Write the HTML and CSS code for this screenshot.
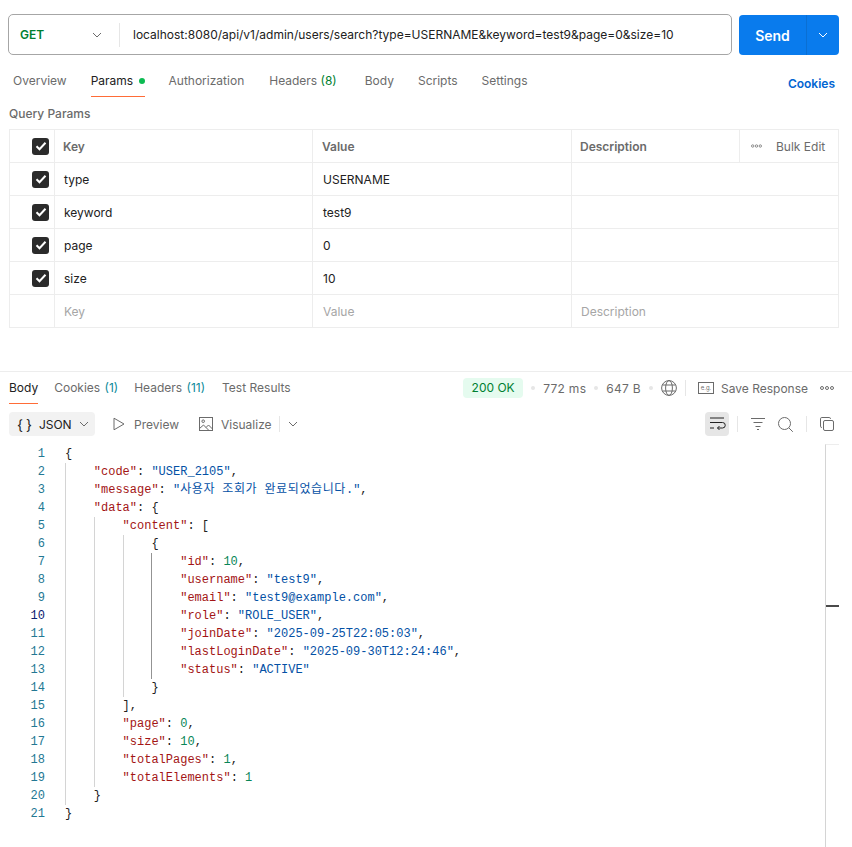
FILE: index.html
```html
<!DOCTYPE html>
<html lang="en">
<head>
    <meta charset="UTF-8">
    <meta name="viewport" content="width=device-width, initial-scale=1.0">
    <title>Request</title>
    <link rel="stylesheet" href="styles.css">
</head>
<body>

<div class="url-row">
    <div class="url-box">
        <div class="method">
            <span>GET</span>
            <svg class="chev" viewBox="0 0 10 6"><path d="M1 1l4 4 4-4"/></svg>
        </div>
        <div class="url">localhost:8080/api/v1/admin/users/search?type=USERNAME&amp;keyword=test9&amp;page=0&amp;size=10</div>
    </div>
    <div class="send">
        <div class="send-label">Send</div>
        <div class="send-more"><svg class="chev" viewBox="0 0 10 6"><path d="M1 1l4 4 4-4"/></svg></div>
    </div>
</div>

<div class="req-tabs">
    <div class="tab">Overview</div>
    <div class="tab active">Params <i class="dot"></i></div>
    <div class="tab tab-auth">Authorization</div>
    <div class="tab tab-wide">Headers <span class="count-green">(8)</span></div>
    <div class="tab">Body</div>
    <div class="tab">Scripts</div>
    <div class="tab">Settings</div>
    <div class="cookies">Cookies</div>
</div>

<div class="section-title">Query Params</div>

<div class="params">
    <div class="row head">
        <div class="cell check"><span class="box"><svg viewBox="0 0 12 10"><path d="M1.500 5.200l3 3L10.500 1.800"/></svg></span></div>
        <div class="cell key">Key</div>
        <div class="cell val">Value</div>
        <div class="cell desc">Description</div>
        <div class="cell bulk">
            <svg class="icon dots-small" viewBox="0 0 11 4"><circle cx="1.700" cy="2" r="1.200"/><circle cx="5.500" cy="2" r="1.200"/><circle cx="9.300" cy="2" r="1.200"/></svg>
            <span>Bulk Edit</span>
        </div>
    </div>
    <div class="row">
        <div class="cell check"><span class="box"><svg viewBox="0 0 12 10"><path d="M1.500 5.200l3 3L10.500 1.800"/></svg></span></div>
        <div class="cell key">type</div>
        <div class="cell val">USERNAME</div>
        <div class="cell desc"></div>
    </div>
    <div class="row">
        <div class="cell check"><span class="box"><svg viewBox="0 0 12 10"><path d="M1.500 5.200l3 3L10.500 1.800"/></svg></span></div>
        <div class="cell key">keyword</div>
        <div class="cell val">test9</div>
        <div class="cell desc"></div>
    </div>
    <div class="row">
        <div class="cell check"><span class="box"><svg viewBox="0 0 12 10"><path d="M1.500 5.200l3 3L10.500 1.800"/></svg></span></div>
        <div class="cell key">page</div>
        <div class="cell val">0</div>
        <div class="cell desc"></div>
    </div>
    <div class="row">
        <div class="cell check"><span class="box"><svg viewBox="0 0 12 10"><path d="M1.500 5.200l3 3L10.500 1.800"/></svg></span></div>
        <div class="cell key">size</div>
        <div class="cell val">10</div>
        <div class="cell desc"></div>
    </div>
    <div class="row empty">
        <div class="cell check"></div>
        <div class="cell key">Key</div>
        <div class="cell val">Value</div>
        <div class="cell desc">Description</div>
    </div>
</div>

<div class="response">
    <div class="res-head">
        <div class="tab active">Body</div>
        <div class="tab">Cookies <span class="count-teal">(1)</span></div>
        <div class="tab tab-res-headers">Headers <span class="count-teal">(11)</span></div>
        <div class="tab">Test Results</div>
        <div class="res-meta">
            <span class="status">200 OK</span>
            <i class="sep-dot"></i>
            <span class="stat">772 ms</span>
            <i class="sep-dot"></i>
            <span class="stat">647 B</span>
            <i class="sep-dot"></i>
            <svg class="icon globe" viewBox="0 0 16 16"><circle cx="8" cy="8" r="7.400"/><ellipse cx="8" cy="8" rx="3.400" ry="7.400"/><path d="M1.400 5h13.200M1.400 11h13.200"/></svg>
            <i class="vline"></i>
            <svg class="icon eg" viewBox="0 0 16 12"><rect x=".5" y=".5" width="15" height="11"/><text x="8" y="8" text-anchor="middle">e.g.</text></svg>
            <span>Save Response</span>
            <svg class="icon dots-big" viewBox="0 0 14 4"><circle cx="2" cy="2" r="1.500"/><circle cx="7" cy="2" r="1.500"/><circle cx="12" cy="2" r="1.500"/></svg>
        </div>
    </div>

    <div class="format-row">
        <div class="format-pill">
            <span class="braces">{ }</span>
            <span>JSON</span>
            <svg class="chev" viewBox="0 0 10 6"><path d="M1 1l4 4 4-4"/></svg>
        </div>
        <div class="format-opt preview">
            <svg class="icon" viewBox="0 0 12 14"><path d="M1 1.200v11.600L11 7z"/></svg>
            <span>Preview</span>
        </div>
        <div class="format-opt visualize">
            <svg class="icon" viewBox="0 0 14 14"><rect x=".5" y=".5" width="13" height="13"/><circle cx="4.200" cy="4.200" r="1.300"/><path d="M.5 11.500l4-3.500 5.500 5.500M7 10.500l2.500-2.500 4 4"/></svg>
            <span>Visualize</span>
        </div>
        <i class="vline"></i>
        <svg class="chev gray" viewBox="0 0 10 6"><path d="M1 1l4 4 4-4"/></svg>

        <div class="format-tools">
            <div class="wrap-btn">
                <svg class="icon" viewBox="0 0 16 14"><path d="M1 1h14M1 11h4M1 5.500h12.500a2.750 2.750 0 0 1 0 5.500H8.500M10.500 9l-2 2 2 2"/></svg>
            </div>
            <i class="vline"></i>
            <svg class="icon filter" viewBox="0 0 14 12"><path d="M0 .5h14M2.500 4.500h9M4.500 8.500h5M6 11.500h2"/></svg>
            <svg class="icon search" viewBox="0 0 15 15"><circle cx="6.500" cy="6.500" r="6"/><path d="M10.800 10.800l4 4"/></svg>
            <i class="vline"></i>
            <svg class="icon copy" viewBox="0 0 14 14"><rect x="3.500" y="3.500" width="10" height="10" rx="1.500"/><path d="M2 10.500h-.2A1.300 1.300 0 0 1 .5 9.200V1.800A1.300 1.300 0 0 1 1.800.5h7.400a1.300 1.300 0 0 1 1.300 1.300V2"/></svg>
        </div>
    </div>

    <div class="editor">
        <div class="gutter">
            <div>1</div><div>2</div><div>3</div><div>4</div><div>5</div><div>6</div><div>7</div>
            <div>8</div><div>9</div><div class="current">10</div><div>11</div><div>12</div><div>13</div><div>14</div>
            <div>15</div><div>16</div><div>17</div><div>18</div><div>19</div><div>20</div><div>21</div>
        </div>
        <div class="code">
            <div class="ln">{</div>
            <div class="fold">
                <div class="ln"><span class="k">"code"</span>: <span class="s">"USER_2105"</span>,</div>
                <div class="ln"><span class="k">"message"</span>: <span class="s">"<span class="ko">사용자</span> <span class="ko">조회가</span> <span class="ko">완료되었습니다</span>."</span>,</div>
                <div class="ln"><span class="k">"data"</span>: {</div>
                <div class="fold">
                    <div class="ln"><span class="k">"content"</span>: [</div>
                    <div class="fold">
                        <div class="ln">{</div>
                        <div class="fold dark-guide">
                            <div class="ln"><span class="k">"id"</span>: <span class="n">10</span>,</div>
                            <div class="ln"><span class="k">"username"</span>: <span class="s">"test9"</span>,</div>
                            <div class="ln"><span class="k">"email"</span>: <span class="s">"test9@example.com"</span>,</div>
                            <div class="ln"><span class="k">"role"</span>: <span class="s">"ROLE_USER"</span>,</div>
                            <div class="ln"><span class="k">"joinDate"</span>: <span class="s">"2025-09-25T22:05:03"</span>,</div>
                            <div class="ln"><span class="k">"lastLoginDate"</span>: <span class="s">"2025-09-30T12:24:46"</span>,</div>
                            <div class="ln"><span class="k">"status"</span>: <span class="s">"ACTIVE"</span></div>
                        </div>
                        <div class="ln">}</div>
                    </div>
                    <div class="ln">],</div>
                    <div class="ln"><span class="k">"page"</span>: <span class="n">0</span>,</div>
                    <div class="ln"><span class="k">"size"</span>: <span class="n">10</span>,</div>
                    <div class="ln"><span class="k">"totalPages"</span>: <span class="n">1</span>,</div>
                    <div class="ln"><span class="k">"totalElements"</span>: <span class="n">1</span></div>
                </div>
                <div class="ln">}</div>
            </div>
            <div class="ln">}</div>
        </div>
        <div class="minimap"><i class="cursor-mark"></i></div>
    </div>
</div>

</body>
</html>
```

FILE: styles.css
```css
html, body {
    height: 100%;
}
body {
    margin: 0;
    overflow: hidden;
    background: #fff;
    color: #6b6b6b;
    font-family: Inter, 'Noto Sans', sans-serif;
    font-size: 12px;
}
svg {
    display: block;
    flex: none;
}
i {
    display: block;
    flex: none;
}
.chev {
    width: 10px;
    height: 6px;
    fill: none;
    stroke: #6b6b6b;
    stroke-width: 1;
}
.icon {
    fill: none;
    stroke: #6b6b6b;
    stroke-width: 1;
}
.vline {
    width: 1px;
    height: 16px;
    background: #e6e6e6;
}

/* url bar */
.url-row {
    display: flex;
    gap: 7px;
    padding: 14px 13px 0 8px;
    height: 41px;
}
.url-box {
    flex: 1;
    display: flex;
    align-items: center;
    border: 1px solid #a6a6a6;
    border-radius: 5px;
}
.method {
    width: 111px;
    height: 24px;
    box-sizing: border-box;
    padding: 0 17px 0 11px;
    display: flex;
    align-items: center;
    justify-content: space-between;
    border-right: 1px solid #e6e6e6;
    color: #007f31;
    font-weight: 600;
}
.url {
    padding-left: 13px;
    color: #212121;
    white-space: nowrap;
}
.send {
    width: 100px;
    height: 40px;
    margin-top: 1px;
    display: flex;
    background: #097bed;
    border-radius: 4px;
    color: #fff;
}
.send-label {
    flex: 1;
    display: flex;
    align-items: center;
    justify-content: center;
    font-size: 14px;
    font-weight: 600;
    border-right: 1px solid #0a6fd3;
}
.send-more {
    width: 32px;
    display: flex;
    align-items: center;
    justify-content: center;
}
.send-more .chev {
    stroke: #fff;
}

/* request tabs */
.req-tabs {
    display: flex;
    gap: 24px;
    height: 32px;
    padding: 0 17px 0 13px;
    margin-top: 10px;
}
.tab {
    display: flex;
    align-items: center;
    height: 31px;
    white-space: pre;
}
.tab.active {
    color: #212121;
    border-bottom: 1px solid #ff6c37;
}
.tab-auth {
    margin-right: 1px;
}
.tab-wide {
    margin-right: 4px;
}
.tab-res-headers {
    margin-right: 1px;
}
.dot {
    width: 6px;
    height: 6px;
    margin-left: 2px;
    border-radius: 50%;
    background: #0cbb52;
}
.count-green {
    color: #007f31;
}
.count-teal {
    margin-left: 1px;
    color: #0b8a99;
}
.cookies {
    margin-left: auto;
    display: flex;
    align-items: center;
    height: 36px;
    color: #0265d2;
    font-weight: 600;
}
.section-title {
    height: 32px;
    padding-left: 9px;
    line-height: 34px;
    font-weight: 500;
}

/* query params table */
.params {
    margin: 0 13px 0 9px;
    border-top: 1px solid #ededed;
    border-left: 1px solid #ededed;
}
.row {
    display: grid;
    grid-template-columns: 45px 258px 259px 168px 99px;
    height: 33px;
    box-sizing: border-box;
    color: #212121;
}
.cell {
    display: flex;
    align-items: center;
    padding-left: 9px;
    border-right: 1px solid #ededed;
    border-bottom: 1px solid #ededed;
}
.row .val {
    padding-left: 10px;
}
.row .desc:nth-last-child(1) {
    grid-column: 4 / 6;
}
.check {
    justify-content: flex-end;
    padding: 0 5px 0 0;
}
.box {
    width: 17px;
    height: 17px;
    display: flex;
    align-items: center;
    justify-content: center;
    background: #2b2b2b;
    border-radius: 3px;
}
.box svg {
    width: 12px;
    height: 10px;
    fill: none;
    stroke: #fff;
    stroke-width: 2;
}
.head .cell {
    color: #6b6b6b;
    font-weight: 600;
    padding-left: 8px;
}
.head .val {
    padding-left: 9px;
}
.head .check {
    padding: 0 5px 0 0;
}
.head .bulk {
    font-weight: 400;
    gap: 14px;
    padding-left: 11px;
}
.dots-small {
    width: 11px;
    height: 4px;
    stroke: #8a8a8a;
}
.dots-big {
    width: 14px;
    height: 4px;
    margin-left: 4px;
}
.empty .cell {
    color: #a6a6a6;
}

/* response */
.response {
    margin-top: 43px;
    border-top: 1px solid #ededed;
}
.res-head {
    display: flex;
    gap: 16px;
    height: 32px;
    padding: 0 18px 0 9px;
}
.res-meta {
    margin-left: auto;
    display: flex;
    align-items: center;
    gap: 8px;
}
.status {
    width: 60px;
    height: 20px;
    line-height: 20px;
    text-align: center;
    border-radius: 4px;
    background: #e5fbef;
    color: #007f31;
}
.stat {
    letter-spacing: .3px;
}
.sep-dot {
    width: 4px;
    height: 4px;
    border-radius: 50%;
    background: #e6e6e6;
}
.globe {
    width: 16px;
    height: 16px;
}
.eg {
    width: 16px;
    height: 12px;
    margin: 0 -1px 0 4px;
}
.eg text {
    font-size: 6px;
    font-family: Inter, sans-serif;
    fill: #6b6b6b;
    stroke: none;
}
.format-row {
    display: flex;
    align-items: center;
    height: 24px;
    margin-top: 8px;
    padding: 0 18px 0 9px;
}
.format-pill {
    width: 86px;
    height: 24px;
    box-sizing: border-box;
    padding: 0 7px 0 8px;
    display: flex;
    align-items: center;
    gap: 7px;
    background: #f2f2f2;
    border-radius: 4px;
    color: #212121;
}
.braces {
    font-size: 14px;
    white-space: nowrap;
    word-spacing: -1px;
}
.format-opt {
    display: flex;
    align-items: center;
    gap: 9px;
}
.preview {
    margin-left: 18px;
}
.preview svg {
    width: 12px;
    height: 14px;
}
.visualize {
    gap: 8px;
    margin: 0 7px 0 20px;
}
.visualize svg {
    width: 14px;
    height: 14px;
}
.format-row .chev.gray {
    margin-left: 8px;
}
.format-tools {
    margin-left: auto;
    display: flex;
    align-items: center;
    gap: 13px;
}
.wrap-btn {
    width: 24px;
    height: 24px;
    margin-right: -5px;
    display: flex;
    align-items: center;
    justify-content: center;
    background: #e6e6e6;
    border-radius: 4px;
}
.wrap-btn .icon {
    width: 16px;
    height: 14px;
    stroke: #212121;
    overflow: visible;
}
.filter {
    width: 14px;
    height: 12px;
}
.search {
    width: 15px;
    height: 15px;
}
.copy {
    width: 14px;
    height: 14px;
}

/* code */
.editor {
    display: flex;
    margin-top: 8px;
    height: 403px;
    font-family: 'Liberation Mono', 'Noto Sans CJK KR', monospace;
    font-size: 12px;
    line-height: 18px;
    color: #212121;
}
.gutter {
    width: 45px;
    padding-top: 1px;
    text-align: right;
    color: #237893;
}
.gutter .current {
    color: #0b216f;
}
.code {
    flex: 1;
    margin-left: 20px;
    padding-top: 1px;
}
.ln {
    height: 18px;
    white-space: pre;
}
.fold {
    padding-left: 27.8px;
    border-left: 1px solid #d4d4d4;
}
.fold.dark-guide {
    border-left-color: #939393;
}
.k {
    color: #a31515;
}
.s {
    color: #0451a5;
}
.n {
    color: #098658;
}
.ko {
    font-family: 'Noto Sans CJK KR', sans-serif;
    line-height: 12px;
    letter-spacing: .6px;
}
.minimap {
    position: relative;
    width: 13px;
    margin-right: 13px;
    border-left: 1px solid #d4d4d4;
    border-top: 1px solid #ededed;
}
.cursor-mark {
    position: absolute;
    top: 160px;
    left: 0;
    width: 13px;
    height: 2px;
    background: #4a4a4a;
}
```
